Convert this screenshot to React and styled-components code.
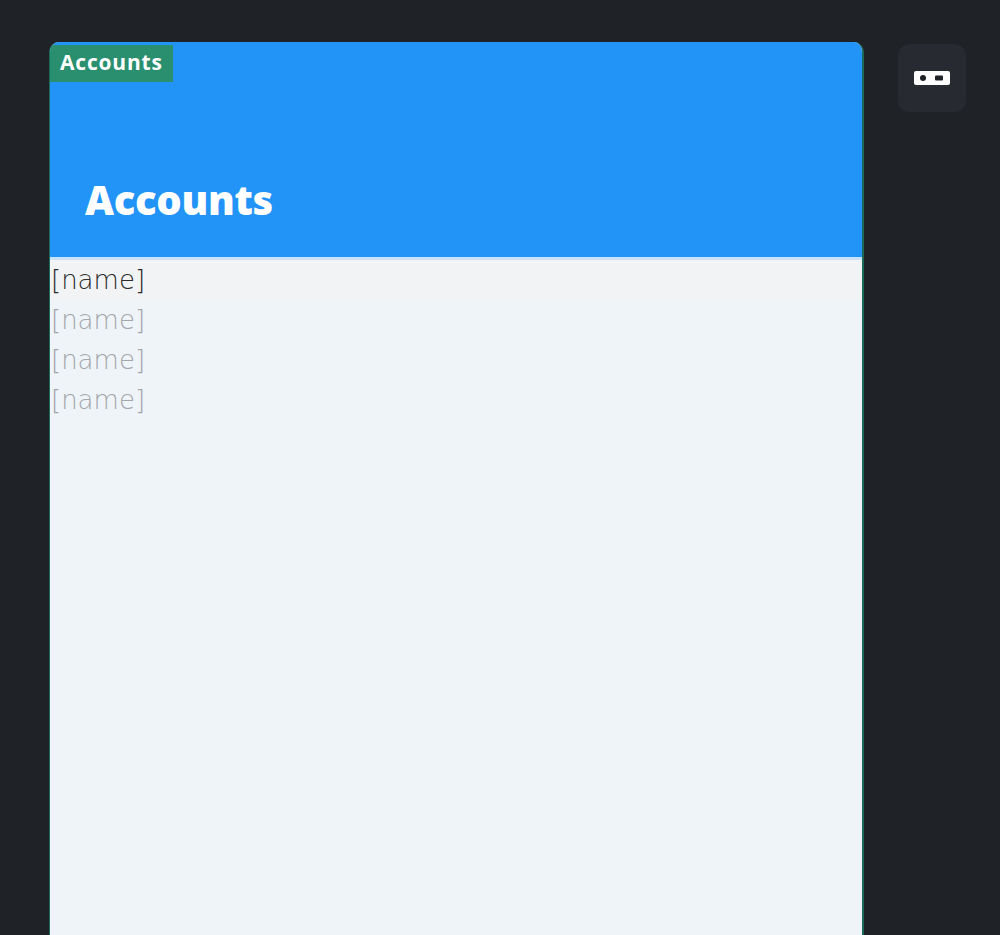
import React from "react";
import styled, { createGlobalStyle } from "styled-components";

const GlobalStyle = createGlobalStyle`
  html, body {
    margin: 0;
    padding: 0;
    background: #1f2327;
    font-family: "Open Sans", "Noto Sans", sans-serif;
  }
`;

const Page = styled.div`
  display: flex;
  align-items: flex-start;
  gap: 34px;
  height: 935px;
  padding: 42px 0 0 49px;
  box-sizing: border-box;
  overflow: hidden;
`;

const Panel = styled.div`
  width: 815px;
  height: 920px;
  display: flex;
  flex-direction: column;
  border-radius: 10px 10px 0 0;
  border-left: 1px solid #1c6a5a;
  border-right: 2px solid #1c6a5a;
  box-sizing: border-box;
  overflow: hidden;
  background: #eff4f9;
`;

const Header = styled.div`
  position: relative;
  height: 218px;
  background: #2394f7;
  border-bottom: 3px solid #c9e2f8;
  display: flex;
  align-items: flex-end;
  padding: 0 0 30px 35px;
  box-sizing: border-box;
`;

const Tag = styled.span`
  position: absolute;
  top: 3px;
  left: 0;
  padding: 3px 10px 6px 10px;
  background: #2a8f6f;
  color: #fff;
  font-weight: 700;
  font-size: 21px;
  letter-spacing: 0.8px;
`;

const Title = styled.h1`
  margin: 0;
  color: #fff;
  font-size: 40px;
  font-weight: 800;
  letter-spacing: -0.3px;
`;

const List = styled.div`
  display: flex;
  flex-direction: column;
`;

const Item = styled.div`
  font-family: "DejaVu Sans", sans-serif;
  font-weight: 200;
  font-size: 26px;
  line-height: 40px;
  color: ${(p) => (p.$active ? "#2b2b2b" : "#a3a6aa")};
  padding-left: 1px;
  background: ${(p) => (p.$active ? "#f1f3f5" : "transparent")};
`;

const IconButton = styled.button`
  width: 68px;
  height: 68px;
  margin-top: 2px;
  border: none;
  border-radius: 12px;
  background: #272b31;
  display: flex;
  align-items: center;
  justify-content: center;
  cursor: pointer;
`;

const names = ["[name]", "[name]", "[name]", "[name]"];

export default function App() {
  return (
    <>
      <GlobalStyle />
      <Page>
        <Panel>
          <Header>
            <Tag>Accounts</Tag>
            <Title>Accounts</Title>
          </Header>
          <List>
            {names.map((n, i) => (
              <Item key={i} $active={i === 0}>
                {n}
              </Item>
            ))}
          </List>
        </Panel>
        <IconButton aria-label="toggle">
          <svg width="38" height="18" viewBox="0 0 38 18">
            <rect x="1" y="2" width="36" height="14" rx="2" fill="#fff" />
            <circle cx="10" cy="9" r="3" fill="#1f2327" />
            <rect x="22" y="6.5" width="8" height="5" rx="1" fill="#1f2327" />
          </svg>
        </IconButton>
      </Page>
    </>
  );
}
